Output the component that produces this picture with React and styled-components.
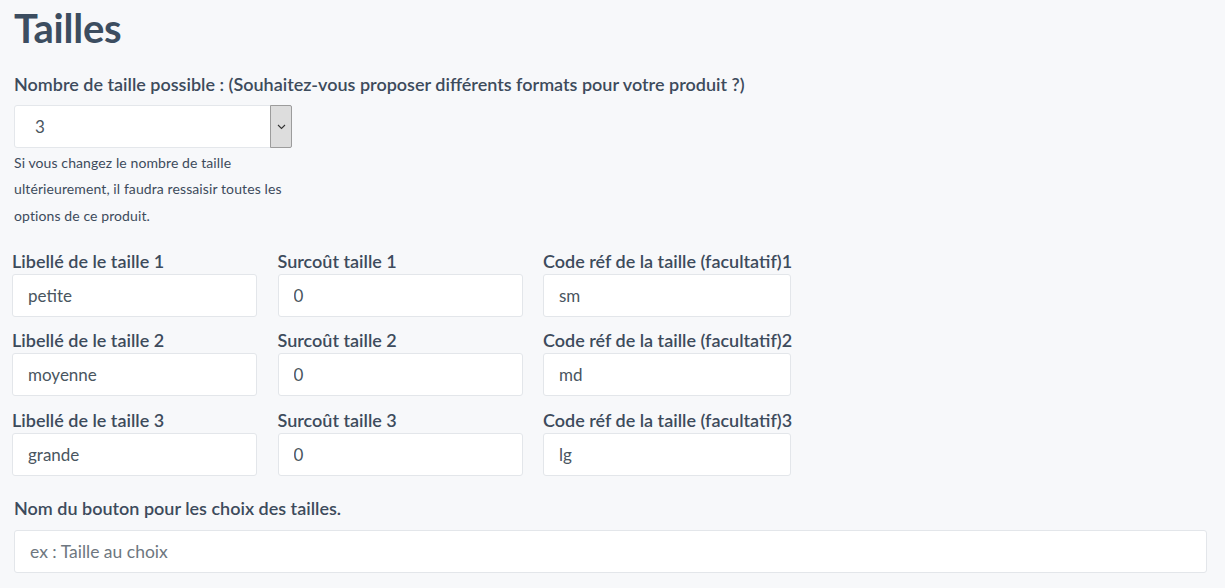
import React from "react";
import styled, { createGlobalStyle } from "styled-components";

const Global = createGlobalStyle`
  html, body { margin: 0; padding: 0; background: #f7f8fa; }
  body { font-family: "Lato", "Noto Sans", sans-serif; color: #3d4b5c; }
  * { box-sizing: border-box; }
`;

const Page = styled.div`
  padding: 0 18px 20px 14px;
  background: #f7f8fa;
  min-height: 588px;
`;

const Title = styled.h1`
  margin: 0;
  padding-top: 4px;
  font-size: 40px;
  line-height: 48px;
  font-weight: 700;
  color: #3c4d60;
  letter-spacing: -0.2px;
`;

const Label = styled.label`
  display: block;
  font-size: 18px;
  line-height: 24px;
  font-weight: 600;
  white-space: nowrap;
  color: #3d4b5c;
  margin: ${(p) => p.$m || "0"};
`;

const SelectBox = styled.div`
  display: flex;
  width: 278px;
  height: 43px;
  margin-top: 9px;
  background: #fff;
  border: 1px solid #e4e7eb;
  border-radius: 3px;
`;

const SelectValue = styled.div`
  flex: 1;
  padding-left: 20px;
  font-size: 17px;
  line-height: 41px;
  color: #495560;
`;

const Chevron = styled.div`
  width: 22px;
  margin: -1px -1px -1px 0;
  background: #dddddd;
  border: 1px solid #9c9c9c;
  border-radius: 0 2px 2px 0;
  display: flex;
  align-items: center;
  justify-content: center;
`;

const Help = styled.p`
  margin: 0;
  padding-top: 1.5px;
  width: 290px;
  font-size: 14px;
  line-height: 26.5px;
  letter-spacing: 0.1px;
  color: #3d4b5c;
`;

const Grid = styled.div`
  display: grid;
  grid-template-columns: 245px 245px 248px;
  column-gap: 20.5px;
  margin: 19.5px 0 0 -2px;
`;

const Field = styled.div`
  display: flex;
  flex-direction: column;
  padding-bottom: 11.5px;
`;

const Input = styled.input`
  display: block;
  width: 100%;
  height: 43px;
  margin: 1px 0 0;
  padding: 0 15px;
  font-family: inherit;
  font-size: 17px;
  color: #495560;
  background: #fff;
  border: 1px solid #e3e6ea;
  border-radius: 3px;
  outline: none;
  &::placeholder { color: #6e7780; font-size: 17.5px; }
`;

const WideInput = styled(Input)`
  margin-top: 10px;
`;

const rows = [
  ["petite", "0", "sm"],
  ["moyenne", "0", "md"],
  ["grande", "0", "lg"],
];

export default function App() {
  return (
    <Page>
      <Global />
      <Title>Tailles</Title>
      <Label $m="20px 0 0">
        Nombre de taille possible : (Souhaitez-vous proposer différents formats pour votre produit ?)
      </Label>
      <SelectBox>
        <SelectValue>3</SelectValue>
        <Chevron>
          <svg width="9" height="6" viewBox="0 0 9 6">
            <path d="M1 1l3.5 3.5L8 1" fill="none" stroke="#333" strokeWidth="1.1" />
          </svg>
        </Chevron>
      </SelectBox>
      <Help>
        Si vous changez le nombre de taille ultérieurement, il faudra ressaisir toutes les options de ce produit.
      </Help>
      <Grid>
        {rows.map((r, i) => (
          <React.Fragment key={i}>
            <Field>
              <Label>Libellé de le taille {i + 1}</Label>
              <Input defaultValue={r[0]} />
            </Field>
            <Field>
              <Label>Surcoût taille {i + 1}</Label>
              <Input defaultValue={r[1]} />
            </Field>
            <Field>
              <Label>Code réf de la taille (facultatif){i + 1}</Label>
              <Input defaultValue={r[2]} />
            </Field>
          </React.Fragment>
        ))}
      </Grid>
      <Label $m="8.5px 0 0">Nom du bouton pour les choix des tailles.</Label>
      <WideInput placeholder="ex : Taille au choix" />
    </Page>
  );
}
